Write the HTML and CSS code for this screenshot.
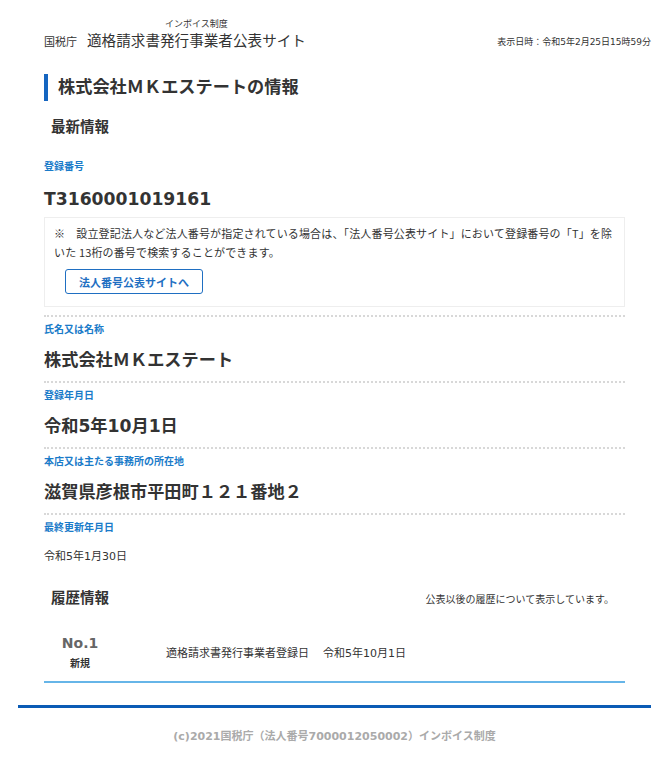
FILE: index.html
```html
<!DOCTYPE html>
<html lang="ja">
<head>
  <meta charset="UTF-8">
  <meta name="viewport" content="width=device-width, initial-scale=1.0">
  <title>株式会社ＭＫエステートの情報 | 適格請求書発行事業者公表サイト</title>
  <link rel="stylesheet" href="styles.css">
</head>
<body>
  <div class="page">
    <header class="site-header">
      <div class="logo">
        <span class="logo-nta">国税庁</span>
        <div class="logo-site">
          <span class="logo-sub">インボイス制度</span>
          <span class="logo-main">適格請求書発行事業者公表サイト</span>
        </div>
      </div>
      <div class="view-date">表示日時：令和5年2月25日15時59分</div>
    </header>

    <main class="main">
      <h1 class="page-title">株式会社ＭＫエステートの情報</h1>
      <h2 class="section-title">最新情報</h2>

      <div class="field field-first">
        <div class="field-label">登録番号</div>
        <div class="field-value">T3160001019161</div>
        <div class="note-box">
          <p class="note-text">※　設立登記法人など法人番号が指定されている場合は、「法人番号公表サイト」において登録番号の「T」を除いた 13桁の番号で検索することができます。</p>
          <button class="link-btn">法人番号公表サイトへ</button>
        </div>
      </div>

      <div class="field">
        <div class="field-label">氏名又は名称</div>
        <div class="field-value">株式会社ＭＫエステート</div>
      </div>

      <div class="field">
        <div class="field-label">登録年月日</div>
        <div class="field-value">令和5年10月1日</div>
      </div>

      <div class="field">
        <div class="field-label">本店又は主たる事務所の所在地</div>
        <div class="field-value">滋賀県彦根市平田町１２１番地２</div>
      </div>

      <div class="field field-last">
        <div class="field-label">最終更新年月日</div>
        <div class="field-small">令和5年1月30日</div>
      </div>

      <div class="history-head">
        <h2 class="section-title">履歴情報</h2>
        <span class="history-note">公表以後の履歴について表示しています。</span>
      </div>

      <div class="history-row">
        <div class="history-no">
          <span class="no-num">No.1</span>
          <span class="no-type">新規</span>
        </div>
        <div class="history-item">適格請求書発行事業者登録日</div>
        <div class="history-date">令和5年10月1日</div>
      </div>
    </main>

    <footer class="site-footer">
      (c)2021国税庁（法人番号7000012050002）インボイス制度
    </footer>
  </div>
</body>
</html>
```

FILE: styles.css
```css
body {
  margin: 0;
  font-family: "DejaVu Sans", "Noto Sans CJK JP", sans-serif;
  color: #333;
  background-color: white;
}

.page {
  width: 633px;
  margin-left: 18px;
}

/* ヘッダー */
.site-header {
  display: flex;
  justify-content: space-between;
  align-items: flex-end;
  padding: 18px 0 0 26px;
}

.logo {
  display: flex;
  align-items: flex-start;
}

.logo-nta {
  font-size: 11px;
  line-height: 16px;
  margin-top: 17px;
  margin-right: 10px;
}

.logo-site {
  display: flex;
  flex-direction: column;
  align-items: center;
}

.logo-sub {
  font-size: 9px;
  line-height: 12px;
}

.logo-main {
  font-size: 14.6px;
  line-height: 22px;
}

.view-date {
  font-size: 9px;
  line-height: 14px;
  margin-bottom: 3px;
}

/* メイン */
.main {
  padding: 0 26px;
}

.page-title {
  margin: 22px 0 0;
  padding-left: 10px;
  border-left: 4px solid #1565c0;
  font-size: 17.2px;
  line-height: 27px;
  font-weight: bold;
}

.section-title {
  margin: 0;
  padding-left: 7px;
  font-size: 14.5px;
  line-height: 22px;
  font-weight: bold;
}

.main > .section-title {
  margin-top: 15px;
}

.field {
  padding: 6px 0 8px;
  border-bottom: 2px dotted #d8d8d8;
}

.field-first {
  padding-top: 22px;
}

.field-last {
  border-bottom: none;
}

.field-label {
  font-size: 10px;
  line-height: 14px;
  font-weight: bold;
  color: #1a7bc9;
}

.field-value {
  margin-top: 10px;
  font-size: 17.2px;
  line-height: 26px;
  font-weight: bold;
}

.field-first .field-value {
  margin-top: 12px;
}

.field-small {
  margin-top: 14px;
  font-size: 11px;
  line-height: 16px;
}

.note-box {
  margin-top: 5px;
  padding: 6px 9px 12px;
  border: 1px solid #eee;
}

.note-text {
  margin: 0;
  font-family: "Noto Sans CJK JP", sans-serif;
  font-size: 11px;
  line-height: 19px;
  letter-spacing: 0.15px;
}

.link-btn {
  margin: 7px 0 0 11px;
  width: 138px;
  height: 25px;
  padding: 0;
  background-color: white;
  border: 1.5px solid #1f6fc2;
  border-radius: 3px;
  color: #1f6fc2;
  font-family: inherit;
  font-size: 11px;
  font-weight: bold;
}

/* 履歴情報 */
.history-head {
  display: flex;
  justify-content: space-between;
  align-items: center;
  margin-top: 14px;
  padding-right: 11px;
}

.history-note {
  font-size: 10px;
}

.history-row {
  display: flex;
  align-items: center;
  margin-top: 23px;
  padding-bottom: 9px;
  border-bottom: 2px solid #66b5e8;
}

.history-no {
  display: flex;
  flex-direction: column;
  align-items: center;
  width: 72px;
}

.no-num {
  font-size: 14px;
  line-height: 22px;
  font-weight: bold;
  color: #666;
}

.no-type {
  margin-top: 2px;
  font-size: 10px;
  line-height: 16px;
  font-weight: bold;
}

.history-item {
  margin-left: 50px;
  font-size: 11px;
}

.history-date {
  margin-left: 14px;
  font-size: 11px;
}

/* フッター */
.site-footer {
  margin-top: 22px;
  padding-top: 21px;
  border-top: 3px solid #0a5bb5;
  text-align: center;
  font-size: 11px;
  line-height: 16px;
  font-weight: bold;
  color: #aaa;
}
```
